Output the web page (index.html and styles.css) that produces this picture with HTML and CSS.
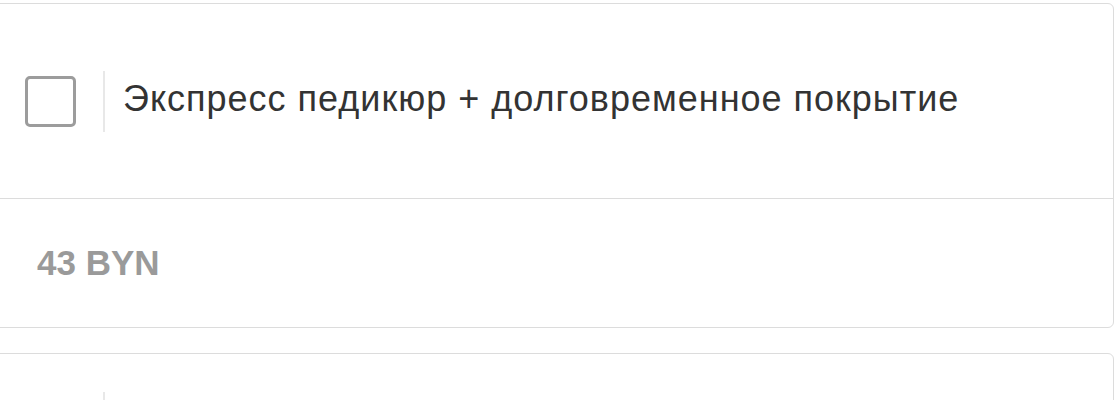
FILE: index.html
```html
<!DOCTYPE html>
<html lang="ru">
<head>
<meta charset="utf-8">
<link rel="stylesheet" href="styles.css">
</head>
<body>
<div class="list">
  <div class="card">
    <div class="row-main">
      <span class="check"></span>
      <span class="sep"></span>
      <span class="title">Экспресс педикюр + долговременное покрытие</span>
    </div>
    <div class="row-price">43 BYN</div>
  </div>
  <div class="card card-next">
    <div class="row-main row-tall">
      <span class="check check-hidden"></span>
      <span class="sep sep-tall"></span>
    </div>
  </div>
</div>
</body>
</html>
```
FILE: styles.css
```css
html, body {
  margin: 0;
  padding: 0;
  background: #fff;
  overflow: hidden;
}
body {
  font-family: "Liberation Sans", Arial, sans-serif;
}
.list {
  padding-top: 3px;
  margin-left: -8px;
  width: 1122px;
  display: flex;
  flex-direction: column;
  gap: 25px;
}
.card {
  border: 1px solid #dcdcdc;
  border-radius: 6px;
  background: #fff;
}
.row-main {
  height: 194px;
  display: flex;
  align-items: center;
  padding-left: 32px;
  border-bottom: 1px solid #dcdcdc;
}
.check {
  width: 45px;
  height: 45px;
  border: 3px solid #9c9c9c;
  border-radius: 5px;
  flex: none;
}
.sep {
  width: 2px;
  height: 61px;
  background: #e8e8e8;
  margin-left: 27px;
  margin-right: 18px;
  flex: none;
}
.title {
  font-size: 36px;
  letter-spacing: 1px;
  color: #333;
  line-height: 1;
  margin-bottom: 5px;
}
.row-price {
  height: 128px;
  display: flex;
  align-items: center;
  padding-left: 44px;
  font-size: 35px;
  font-weight: bold;
  color: #9a9a9a;
}
.row-tall {
  height: 140px;
  align-items: flex-start;
  padding-top: 38px;
}
.check-hidden {
  margin-top: 12px;
}
.sep-tall {
  height: 100px;
}
```
